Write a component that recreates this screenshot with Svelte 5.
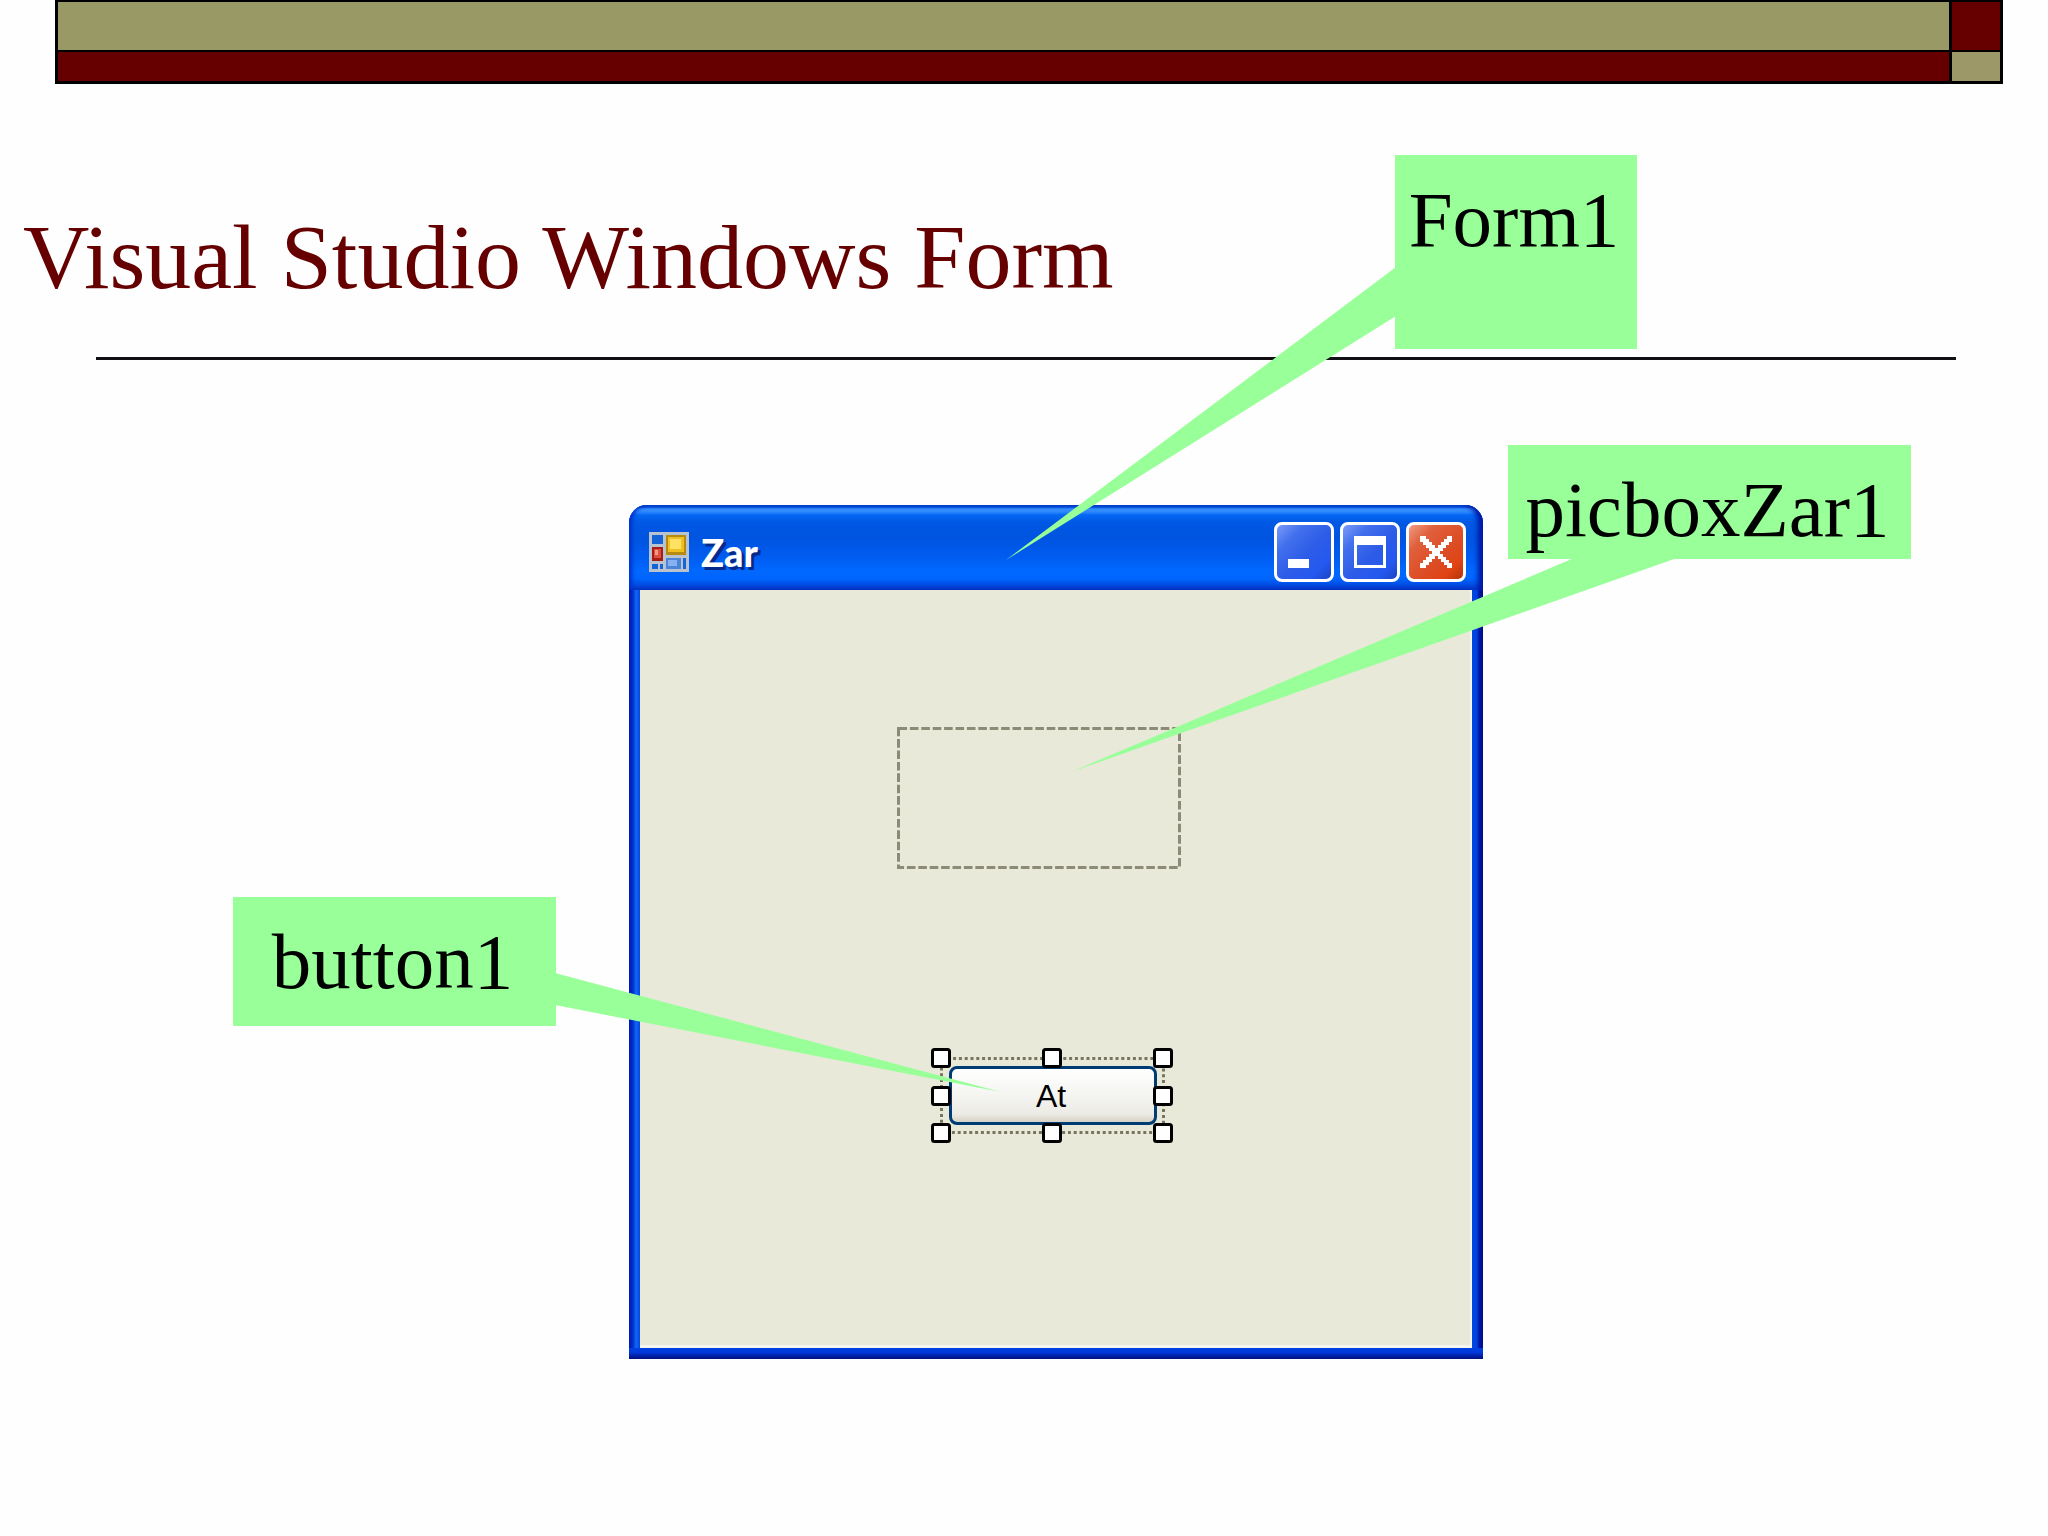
<script>
  const handles = [
    [0, 0], [111, 0], [222, 0],
    [0, 38], [222, 38],
    [0, 75], [111, 75], [222, 75]
  ];
</script>

<main class="slide">
  <div class="banner" aria-hidden="true">
    <span class="olive"></span><span class="maroon"></span>
    <span class="maroon"></span><span class="olive small"></span>
  </div>

  <h1>Visual Studio Windows Form</h1>
  <hr />

  <section class="window" aria-label="Zar">
    <header class="titlebar">
      <svg class="app-icon" viewBox="0 0 40 40" aria-hidden="true">
        <rect width="40" height="40" fill="#b9c3cf" />
        <rect x="3" y="3" width="11" height="9" fill="#1463d8" />
        <rect x="17" y="3" width="20" height="20" fill="#b58a10" />
        <rect x="19" y="5" width="16" height="15" fill="#f0c020" />
        <rect x="21" y="7" width="11" height="10" fill="#ffe166" />
        <rect x="3" y="15" width="11" height="14" fill="#a81c14" />
        <rect x="5" y="17" width="7" height="9" fill="#dc5040" />
        <rect x="6" y="18" width="3" height="5" fill="#f59a8c" />
        <rect x="3" y="32" width="6" height="5" fill="#1463d8" />
        <rect x="11" y="32" width="3" height="5" fill="#1463d8" />
        <rect x="17" y="26" width="15" height="11" fill="#4b83d6" />
        <rect x="19" y="28" width="9" height="6" fill="#86b2f2" />
        <rect x="34" y="26" width="3" height="11" fill="#1463d8" />
      </svg>
      <h2>Zar</h2>
      <button class="control" aria-label="Minimize">
        <svg viewBox="0 0 60 60" aria-hidden="true"><rect x="14" y="37" width="21" height="9" fill="#fff" /></svg>
      </button>
      <button class="control" aria-label="Maximize">
        <svg viewBox="0 0 60 60" aria-hidden="true"><path d="M14 14H46V46H14ZM17 23V43H43V23Z" fill="#fff" fill-rule="evenodd" /></svg>
      </button>
      <button class="control close" aria-label="Close">
        <svg viewBox="0 0 60 60" aria-hidden="true">
          <path d="M14 14H20V17H23V20H26V23H29V26H32V23H35V20H38V17H41V14H46V20H43V23H40V26H37V29H34V32H37V35H40V38H43V41H46V46H41V43H38V40H35V37H32V34H29V37H26V40H23V43H20V46H14V41H17V38H20V35H23V32H26V29H23V26H20V23H17V20H14Z" fill="#fff" />
        </svg>
      </button>
    </header>

    <div class="client">
      <svg class="picture-box" viewBox="0 0 284 142" role="img" aria-label="Picture box">
        <rect x="1.5" y="1.5" width="281" height="139" fill="none" stroke="#8c8b78" stroke-width="3" stroke-dasharray="8.6 2.8" />
      </svg>
      <div class="selection">
        <button class="form-button">At</button>
        <svg class="handles" viewBox="0 0 243 95" aria-hidden="true">
          <rect x="10.5" y="10.5" width="222" height="74" fill="none" stroke="#77745f" stroke-width="3" stroke-dasharray="3 2.8" />
          {#each handles as [x, y]}
            <rect x={x + 1.5} y={y + 1.5} width="17" height="17" rx="2" fill="#fff" stroke="#000" stroke-width="3" />
          {/each}
        </svg>
      </div>
    </div>
  </section>

  <svg class="tails" aria-hidden="true">
    <path d="M1396 267L1006 560L1396 316Z" />
    <path d="M1574 558L1071 772L1677 558Z" />
    <path d="M555 973L1001 1092L555 1005Z" />
  </svg>
  <p class="callout form">Form1</p>
  <p class="callout picbox">picboxZar1</p>
  <p class="callout button">button1</p>
</main>

<style>
  :global(body) {
    margin: 0;
    background: #fefefe;
  }
  .slide {
    position: relative;
    box-sizing: border-box;
    min-height: 100vh;
    padding: 0 45px 0 55px;
    overflow: hidden;
    font-family: "Liberation Serif", "Times New Roman", serif;
  }
  .banner {
    display: grid;
    grid-template-columns: 1fr 48px;
    grid-template-rows: 48px 29px;
    gap: 2px 3px;
    padding: 2px 3px 3px;
    background: #000;
  }
  .olive { background: #989965; }
  .olive.small { background: #9c9868; }
  .maroon { background: #660000; }
  h1 {
    margin: 121px 0 0 -32px;
    font-size: 92px;
    line-height: 104px;
    font-weight: 400;
    color: #660000;
  }
  hr {
    height: 3px;
    margin: 48px 47px 0 41px;
    border: 0;
    background: #121014;
  }
  .window {
    display: flex;
    flex-direction: column;
    box-sizing: border-box;
    width: 854px;
    margin: 145px 0 0 574px;
    padding: 0 11px 11px;
    border-radius: 18px 18px 0 0;
    background:
      linear-gradient(180deg, #0040e0 0, #0038d8 40%, #001a9c 80%, #00107c) bottom / 100% 11px no-repeat,
      linear-gradient(90deg, #0018b0 0, #0030d0 4px, #1268f4 7px, #0048e0 11px, #0048e0 calc(100% - 11px), #0040e0 calc(100% - 6px), #0018a4 calc(100% - 4px), #000c84);
  }
  .titlebar {
    display: flex;
    align-items: center;
    gap: 6px;
    box-sizing: border-box;
    height: 85px;
    margin: 0 -11px;
    padding: 9px 17px 0 20px;
    border-radius: 18px 18px 0 0;
    background: linear-gradient(180deg, #0050d8 0, #0054dc 2px, #3890ff 4px, #2c88ff 7px, #0468f4 10px, #0058e4 17px, #0054e0 32px, #005cf0 52px, #0068ff 66px, #0064fc 74px, #0048dc 81px, #003cc8 85px);
    box-shadow: inset 4px 0 4px -1px #0030cc, inset -6px 0 5px -1px #0018a4;
  }
  .app-icon {
    width: 40px;
    height: 40px;
  }
  h2 {
    flex: 1;
    margin: 0 0 0 6px;
    font: 900 38px/44px Lato, "Liberation Sans", sans-serif;
    color: #fff;
    text-shadow: 3px 3px 0 #062a8c;
  }
  .control {
    box-sizing: border-box;
    width: 60px;
    height: 60px;
    padding: 0;
    border: 3px solid #fff;
    border-radius: 8px;
    background: linear-gradient(135deg, #7c9cf8 0, #4270ec 25%, #2c5ce8 55%, #2458f0 80%, #1c44c4);
  }
  .control svg {
    display: block;
    width: 60px;
    height: 60px;
    margin: -3px;
  }
  .close {
    background: linear-gradient(135deg, #f09c84 0, #e0603c 25%, #dc4c24 60%, #e04414 80%, #b43408);
  }
  .client {
    display: flex;
    flex-direction: column;
    align-items: flex-start;
    box-sizing: border-box;
    min-height: 758px;
    padding: 137px 0 0 257px;
    border: solid #f4f4f0;
    border-width: 0 2px 3px 0;
    background: #e9e9d9;
  }
  .picture-box {
    width: 284px;
    height: 142px;
  }
  .selection {
    position: relative;
    box-sizing: border-box;
    width: 243px;
    height: 95px;
    margin: 179px 0 0 34px;
    padding: 18px;
  }
  .form-button {
    display: block;
    box-sizing: border-box;
    width: 208px;
    height: 59px;
    padding: 0 4px 0 0;
    border: 3px solid #003c74;
    border-radius: 8px;
    background: linear-gradient(180deg, #fff, #f4f4f1 50%, #ecebe5 85%, #d8d2c4);
    font: 32px/40px "Liberation Sans", Arial, sans-serif;
    color: #000;
  }
  .handles {
    position: absolute;
    inset: 0;
    width: 243px;
    height: 95px;
    pointer-events: none;
  }
  .tails {
    position: absolute;
    inset: 0;
    width: 100%;
    height: 100%;
    fill: #99ff99;
    pointer-events: none;
  }
  .callout {
    position: absolute;
    box-sizing: border-box;
    margin: 0;
    padding: 20px 4px 0 0;
    background: #99ff99;
    font-size: 79px;
    line-height: 90px;
    text-align: center;
    color: #000;
  }
  .form {
    left: 1395px;
    top: 155px;
    width: 242px;
    height: 194px;
  }
  .picbox {
    left: 1508px;
    top: 445px;
    width: 403px;
    height: 114px;
  }
  .button {
    left: 233px;
    top: 897px;
    width: 323px;
    height: 129px;
  }
</style>
